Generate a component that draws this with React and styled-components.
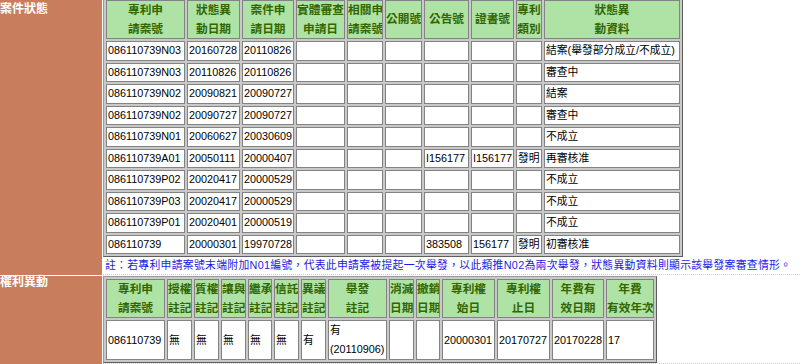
import React from 'react';
import styled, { createGlobalStyle } from 'styled-components';

const GlobalStyle = createGlobalStyle`
  html, body {
    margin: 0;
    padding: 0;
    background: #fff;
  }
  body {
    font-family: "Liberation Sans", Arial, "Noto Sans CJK TC", sans-serif;
    overflow: hidden;
  }
`;

const Page = styled.div`
  display: grid;
  grid-template-columns: 102px 1fr;
  grid-template-rows: auto 1fr;
  column-gap: 1px;
  row-gap: 1px;
  width: 800px;
  height: 364px;
  overflow: hidden;
`;

const Label = styled.div`
  background: #c87d5c;
  color: #fff;
  font-weight: bold;
  font-size: 12px;
  line-height: 12px;
  padding-top: ${p => p.$pad || 0}px;
`;

const Section = styled.div`
  min-width: 0;
  border-bottom: 1px dotted #d0d0d0;
`;

const Grid = styled.table`
  table-layout: fixed;
  box-sizing: border-box;
  width: ${p => p.$width}px;
  margin-top: ${p => p.$top || 0}px;
  border-collapse: separate;
  border-spacing: 2px;
  border: 1px solid;
  border-color: #9a9a9a #5e5e5e #5e5e5e #9a9a9a;
  background: #c9c9c9;
`;

const Head = styled.th`
  box-sizing: border-box;
  width: ${p => p.$w}px;
  padding: 0;
  background: #afe3a5;
  color: #336600;
  font-weight: bold;
  font-size: 11.7px;
  line-height: 18.5px;
  text-align: center;
  vertical-align: middle;
  white-space: nowrap;
  overflow: hidden;
  border: 1px solid #838383;
`;

const Cell = styled.td`
  padding: 0 1px;
  background: #fff;
  color: #000;
  font-size: 10.8px;
  line-height: ${p => p.$lh}px;
  text-align: left;
  vertical-align: middle;
  white-space: nowrap;
  overflow: hidden;
  border: 1px solid #838383;
`;

const Note = styled.p`
  margin: 0;
  padding-left: 2px;
  color: #1a1ae6;
  font-size: 10.8px;
  letter-spacing: 0.32px;
  line-height: 17px;
  white-space: nowrap;
`;

const caseCols = [
  ['專利申', '請案號', 79],
  ['狀態異', '動日期', 53],
  ['案件申', '請日期', 52],
  ['實體審查', '申請日', 49],
  ['相關申', '請案號', 36],
  ['公開號', null, 37],
  ['公告號', null, 45],
  ['證書號', null, 43],
  ['專利', '類別', 26],
  ['狀態異', '動資料', 136],
];

const caseRows = [
  ['086110739N03', '20160728', '20110826', '', '', '', '', '', '', '結案(舉發部分成立/不成立)'],
  ['086110739N03', '20110826', '20110826', '', '', '', '', '', '', '審查中'],
  ['086110739N02', '20090821', '20090727', '', '', '', '', '', '', '結案'],
  ['086110739N02', '20090727', '20090727', '', '', '', '', '', '', '審查中'],
  ['086110739N01', '20060627', '20030609', '', '', '', '', '', '', '不成立'],
  ['086110739A01', '20050111', '20000407', '', '', '', 'I156177', 'I156177', '發明', '再審核准'],
  ['086110739P02', '20020417', '20000529', '', '', '', '', '', '', '不成立'],
  ['086110739P03', '20020417', '20000529', '', '', '', '', '', '', '不成立'],
  ['086110739P01', '20020401', '20000519', '', '', '', '', '', '', '不成立'],
  ['086110739', '20000301', '19970728', '', '', '', '383508', '156177', '發明', '初審核准'],
];

const rightCols = [
  ['專利申', '請案號', 59],
  ['授權', '註記', 25],
  ['質權', '註記', 25],
  ['讓與', '註記', 25],
  ['繼承', '註記', 24],
  ['信託', '註記', 25],
  ['異議', '註記', 25],
  ['舉發', '註記', 59],
  ['消滅', '日期', 25],
  ['撤銷', '日期', 24],
  ['專利權', '始日', 53],
  ['專利權', '止日', 53],
  ['年費有', '效日期', 52],
  ['年費', '有效年次', 48],
];

const rightRow = [
  '086110739', '無', '無', '無', '無', '無', '有',
  ['有', '(20110906)'],
  '', '', '20000301', '20170727', '20170228', '17',
];

function HeadRow({ cols }) {
  return (
    <tr>
      {cols.map(([a, b, w], i) => (
        <Head key={i} $w={w}>
          {a}
          {b && <br />}
          {b}
        </Head>
      ))}
    </tr>
  );
}

function CaseTable() {
  return (
    <Grid $width={580} $top={-3}>
      <thead>
        <HeadRow cols={caseCols} />
      </thead>
      <tbody>
        {caseRows.map((row, r) => (
          <tr key={r}>
            {row.map((v, i) => (
              <Cell key={i} $lh={17.5}>{v}</Cell>
            ))}
          </tr>
        ))}
      </tbody>
    </Grid>
  );
}

function RightsTable() {
  return (
    <Grid $width={554}>
      <thead>
        <HeadRow cols={rightCols} />
      </thead>
      <tbody>
        <tr>
          {rightRow.map((v, i) => (
            <Cell key={i} $lh={19}>
              {Array.isArray(v) ? (
                <>
                  {v[0]}
                  <br />
                  {v[1]}
                </>
              ) : v}
            </Cell>
          ))}
        </tr>
      </tbody>
    </Grid>
  );
}

export default function App() {
  return (
    <>
      <GlobalStyle />
      <Page>
        <Label $pad={3}>案件狀態</Label>
        <Section>
          <CaseTable />
          <Note>
            註：若專利申請案號末端附加N01編號，代表此申請案被提起一次舉發，以此類推N02為兩次舉發，狀態異動資料則顯示該舉發案審查情形。
          </Note>
        </Section>
        <Label>權利異動</Label>
        <Section>
          <RightsTable />
        </Section>
      </Page>
    </>
  );
}
